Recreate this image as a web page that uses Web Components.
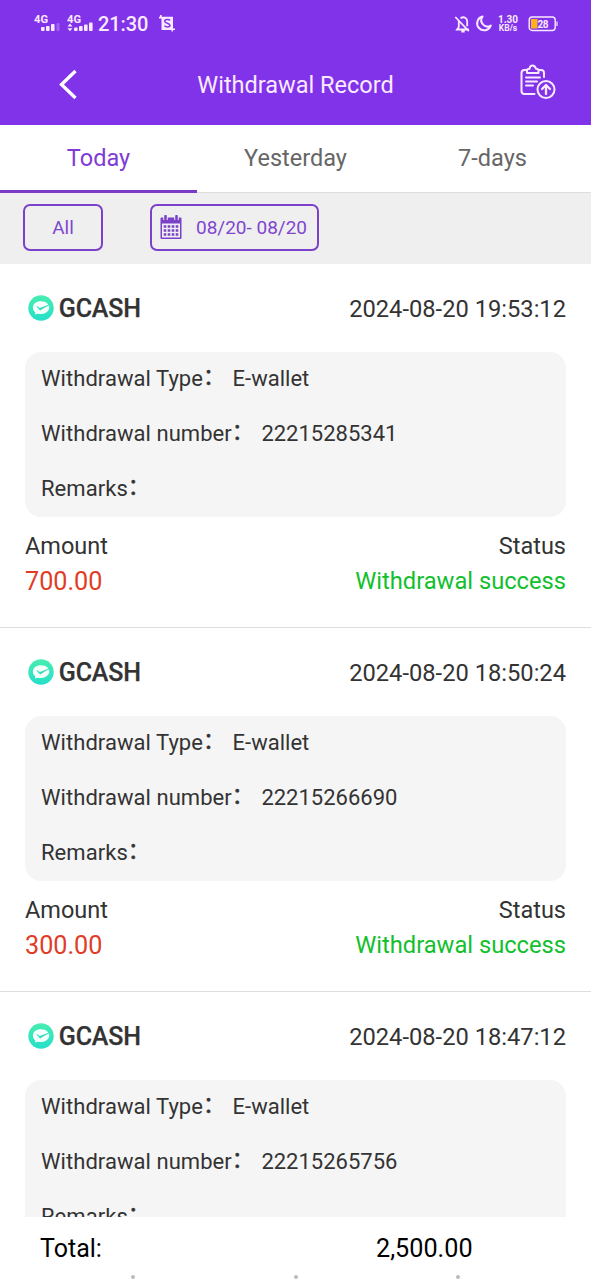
<!DOCTYPE html>
<html lang="en">
<head>
<meta charset="utf-8">
<title>Withdrawal Record</title>
<style>
html,body{margin:0;height:100%}
body{font-family:Roboto,"Noto Sans CJK SC",sans-serif;color:#333;background:#fff;overflow:hidden}
</style>
</head>
<body>
<record-app></record-app>
<script>
function define(name, html) {
  const t = document.createElement('template');
  t.innerHTML = html;
  customElements.define(name, class extends HTMLElement {
    constructor() {
      super();
      this.attachShadow({mode: 'open'}).append(t.content.cloneNode(true));
    }
  });
}

define('status-bar', `<style>
:host{display:flex;height:47px;align-items:center;color:#fbeaff;box-sizing:border-box;padding:0 32px 0 34px}
svg{display:block;flex:none}
.time{font-size:20px;line-height:24px;margin-left:5px;font-weight:500;width:50px;letter-spacing:-.1px}
.shot{margin:-2px 0 0 10px}.right{margin-left:auto;display:flex;align-items:center}
.net{font-size:10px;line-height:9px;font-weight:700;text-align:center;width:22px;margin:0 9px 0 -5px}
.net div:last-child{font-size:8.5px}
text{font-family:Roboto,sans-serif;font-weight:700}
</style>
<svg width="59" height="24" viewBox="0 0 59 24" fill="currentColor">
<text x="0" y="11" font-size="10.5" textLength="14" lengthAdjust="spacingAndGlyphs">4G</text>
<rect x="7" y="15" width="3.6" height="4" rx="1"/><rect x="12" y="14" width="3.6" height="5" rx="1"/><rect x="17" y="12" width="3.6" height="7" rx="1"/><rect x="22.5" y="11" width="3" height="8" rx="1" opacity=".25"/>
<text x="33" y="11" font-size="10.5" textLength="14" lengthAdjust="spacingAndGlyphs">4G</text>
<path d="M33.5 14.500L36 11.500l2.500 3zM33.500 16.300L36 19.300l2.500-3z"/>
<rect x="40" y="15.500" width="3.600" height="3.500" rx="1"/><rect x="45" y="14" width="3.600" height="5" rx="1"/><rect x="50" y="12.500" width="3.600" height="6.500" rx="1"/><rect x="55" y="10.500" width="3.600" height="8.500" rx="1"/>
</svg>
<div class="time">21:30</div>
<svg class="shot" width="18" height="18" viewBox="0 0 18 18" fill="currentColor"><path d="M2 1h1.700v1.700H15V14.500h2V16h-2v1.500h-1.500V16H3.500V4.500H1V2.700h1z"/><path d="M12 6.500C11.500 5.200 6.700 5 6.700 7.300c0 2.400 5.300 1.600 5.300 4 0 2.200-4.800 2.100-5.500.3" fill="none" stroke="#8034e9" stroke-width="1.500"/></svg>
<div class="right">
<svg width="48" height="20" viewBox="0 0 48 20" fill="none" stroke="currentColor" stroke-width="1.800">
<path d="M4.800 7v6l-1.800 2.500h12M6.500 4.400C10 1.600 13.200 4.500 13.200 7.500v4.800M7.300 17.500h3.400M1.300 3l13.500 14.200"/>
<path d="M29.300 3a7 7 0 1 0 8.200 9a6.200 6.200 0 0 1-8.200-9z" stroke-linejoin="round" stroke-width="2" transform="translate(-.7 -.5)"/></svg>
<div class="net"><div>1.30</div><div>KB/s</div></div>
<svg width="31" height="18" viewBox="0 0 31 18"><rect x="1.200" y="2" width="26" height="13.500" rx="3" fill="none" stroke="currentColor" stroke-width="1.400"/><rect x="3" y="4" width="6.500" height="9.500" fill="#ffb11b"/><path d="M29 6.500v4.500" stroke="currentColor" stroke-width="1.200"/><text x="9.500" y="12.500" font-size="10" textLength="11" fill="currentColor">28</text></svg>
</div>`);

define('nav-bar', `<style>
:host{display:grid;grid-template-columns:197px 1fr 197px;height:78px;align-items:center;color:#fbeaff}
h1{margin:-2px 0 0;font-size:23.500px;font-weight:400;text-align:center;white-space:nowrap;line-height:30px}
svg{display:block}.back{margin:-5px 0 0 57px}.rec{margin:-8px 0 0 126px}
</style>
<svg class="back" width="22" height="32" viewBox="0 0 22 32" fill="none" stroke="#fff" stroke-width="3.300"><path d="M18.500 3L4.500 16.500L18.500 30"/></svg>
<h1><slot></slot></h1>
<svg class="rec" width="38" height="38" viewBox="0 0 38 38" fill="none" stroke="currentColor" stroke-width="2" stroke-linecap="round" stroke-linejoin="round">
<path d="M6.500 7H4.500q-3 0-3 3v18q0 3 3 3h10M18.500 7H21q3 0 3 3v4M7 10V7.500q0-1.700 2.500-1.700Q10 2.500 12.500 2.500T16 5.800q2.500 0 2.500 1.700V10zM6 14.500h14M6 18.500h11M6 22.500h7"/><circle cx="26" cy="26.500" r="8.500"/><path d="M26 31v-8M22 26l4-4 4 4" stroke-width="2.300"/></svg>`);

define('tab-item', `<style>
:host{display:flex;flex:1;align-items:center;justify-content:center;box-sizing:border-box;border-bottom:1px solid #ddd;color:#666;font-size:23.500px}
:host([active]){color:#7f3bd6;border-bottom:3px solid #7c3ac9;padding-top:2px}
</style><slot></slot>`);

define('filter-button', `<style>
:host{display:flex;box-sizing:border-box;height:47px;border:2px solid #7b42c9;border-radius:7px;align-items:center;justify-content:center;color:#7f46cf;font-size:19px;white-space:nowrap}
</style><slot name="icon"></slot><slot></slot>`);

define('calendar-icon', `<style>:host{display:block;width:22px;height:24px;margin:-2px 14px 0 -2px}svg{display:block}</style>
<svg width="22" height="24" viewBox="0 0 22 24" fill="#7b42c9"><path fill-rule="evenodd" d="M1.500 2.500h19q1 0 1 1V23q0 1-1 1h-19q-1 0-1-1V3.500q0-1 1-1zM2 8.500v14h18v-14z"/><path d="M5.500 0v5M16.500 0v5" stroke="#efefef" stroke-width="4.500"/><path d="M5.500 1v3.500M16.500 1v3.500" stroke="#7b42c9" stroke-width="2.500" stroke-linecap="round"/><path d="M3.700 11.500h14.600M3.700 15.500h14.600M3.700 19.500h14.600" stroke="#7b42c9" stroke-width="2.500" stroke-dasharray="2.600 1.400"/></svg>`);

define('wallet-logo', `<style>:host{display:block}svg{display:block}</style>
<svg width="26" height="26" viewBox="0 0 26 26"><defs><linearGradient id="g" x2="0" y2="1"><stop stop-color="#48edb0"/><stop offset="1" stop-color="#25dfca"/></linearGradient></defs><circle cx="13" cy="13" r="12.700" fill="url(#g)"/><path d="M13 6.200c5 0 8.300 2.900 8.300 6.400s-3.500 6.500-8.300 6.500c-1.200 0-2.300 0-3.400-.4L7 19.600l.3-2.300C5.700 16 4.900 14.500 4.900 12.500 4.900 8.900 8.200 6.200 13 6.200z" fill="#f5fffc"/><path d="M8.800 11.300l3 2 9.200-3.500-9 5.500z" fill="#30d9b6" stroke="#30d9b6" stroke-width=".5"/></svg>`);

define('info-row', `<style>
:host{display:flex;height:55px;align-items:baseline;font-size:22px;line-height:53px;white-space:pre}
.k{letter-spacing:.05px}.c{line-height:20px;width:22px;position:relative;top:-2px;-webkit-text-stroke:.4px currentColor}.v{margin-left:7.600px}
</style><span class="k"><slot name="label"></slot></span><span class="c">：</span><span class="v"><slot></slot></span>`);

define('record-card', `<style>
:host{display:block;height:364px;flex:none;box-sizing:border-box;border-bottom:1px solid #ddd;padding:0 25px}
header{display:flex;height:88px;align-items:center;padding-left:3px}
header b{font-size:25px;letter-spacing:-.15px;margin:1px 0 0 4.800px;font-weight:500;line-height:30px;-webkit-text-stroke:.25px currentColor}
header time{margin:2px 0 0 auto;font-size:23.700px}
.box{background:#f5f5f5;border-radius:16px;height:165px;padding-left:16px;width:541px;box-sizing:border-box}
.line{display:flex;justify-content:space-between;height:35px;align-items:center;font-size:23.500px}
.sum{margin-top:12px}.sum span{margin-top:-2px}
.amt{color:#e03c26;font-size:25.200px}.ok{color:#12bf2c;font-size:23.700px;margin-top:-1px}
:host([short]) .line{display:none}
</style>
<header><wallet-logo></wallet-logo><b><slot name="name"></slot></b><time><slot name="time"></slot></time></header>
<div class="box"><info-row><span slot="label">Withdrawal Type</span><slot name="type"></slot></info-row><info-row><span slot="label">Withdrawal number</span><slot name="number"></slot></info-row><info-row><span slot="label">Remarks</span></info-row></div>
<div class="line sum"><span>Amount</span><span>Status</span></div>
<div class="line"><span class="amt"><slot name="amount"></slot></span><span class="ok"><slot name="status"></slot></span></div>`);

define('total-bar', `<style>
:host{display:grid;grid-template-columns:376px 1fr;grid-template-rows:61px 2px;height:63px;flex:none;background:#fff;color:#000;font-size:25.200px;align-items:center}
.t{padding:1px 0 0 40px;font-size:25px}.n{padding-top:1px}
.dots{grid-column:1/3;display:flex;justify-content:space-between;padding:0 131px;height:4px;align-self:end;padding-bottom:1px}
i{width:4px;height:4px;border-radius:50%;background:#bbb}
</style><span class="t">Total:</span><span class="n"><slot></slot></span><div class="dots"><i></i><i></i><i></i></div>`);

define('record-app', `<style>
:host{display:flex;flex-direction:column;height:1280px;width:591px;overflow:hidden}
.top{background:#8133ea;height:125px;flex:none}
.tabs{display:flex;height:67.500px;flex:none}
.filters{display:flex;gap:47px;padding:11.500px 23px 0;height:60px;background:#efefef;flex:none}
.list{flex:1;min-height:0;overflow:hidden;display:flex;flex-direction:column}
</style>
<div class="top"><status-bar></status-bar><nav-bar>Withdrawal Record</nav-bar></div>
<div class="tabs"><tab-item active>Today</tab-item><tab-item>Yesterday</tab-item><tab-item>7-days</tab-item></div>
<div class="filters"><filter-button style="width:80px">All</filter-button><filter-button style="width:169px"><calendar-icon slot="icon"></calendar-icon>08/20- 08/20</filter-button></div>
<div class="list">${[['19:53:12','22215285341','700.00'],['18:50:24','22215266690','300.00'],['18:47:12','22215265756','']].map(r=>`<record-card${r[2]?'':' short'}><span slot="name">GCASH</span><span slot="time">2024-08-20 ${r[0]}</span><span slot="type">E-wallet</span><span slot="number">${r[1]}</span>${r[2]?`<span slot="amount">${r[2]}</span><span slot="status">Withdrawal success</span>`:''}</record-card>`).join('')}</div>
<total-bar>2,500.00</total-bar>`);
</script>
</body>
</html>
